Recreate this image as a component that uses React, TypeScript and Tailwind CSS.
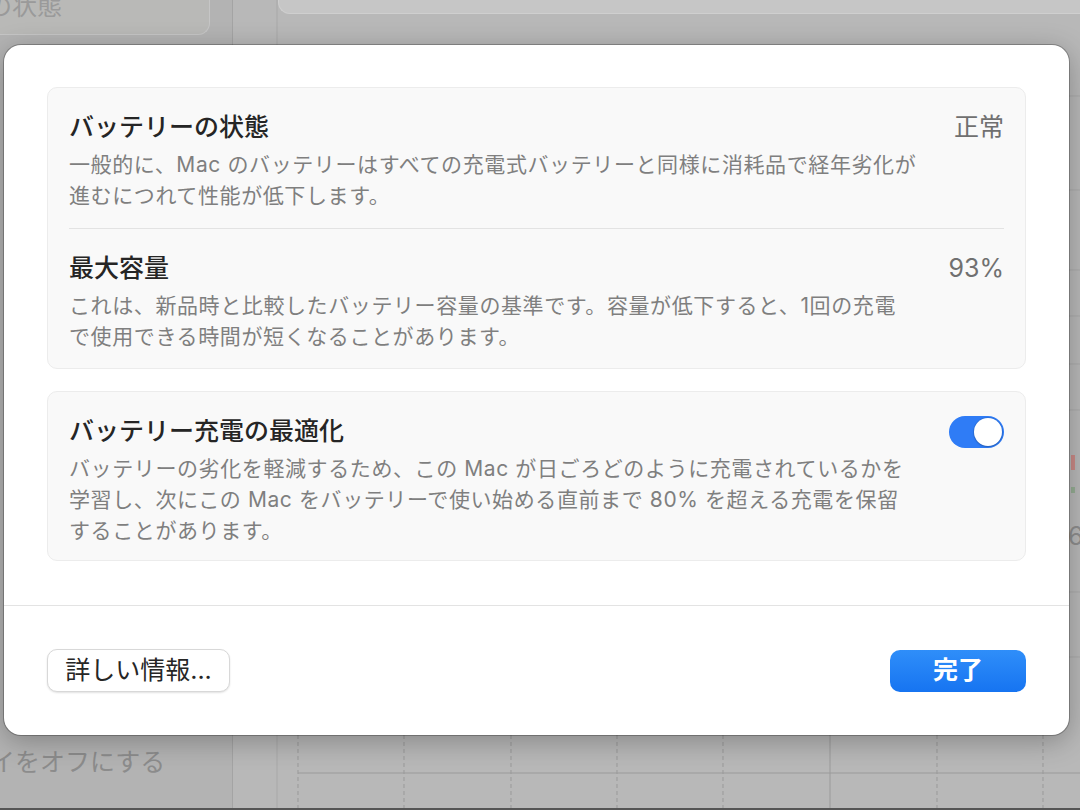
import React from "react";

function Row({
  title,
  value,
  lines,
  pt,
  pb,
}: {
  title: string;
  value: string;
  lines: string[];
  pt: string;
  pb: string;
}) {
  return (
    <div className={`flex items-start justify-between px-[21px] ${pt} ${pb}`}>
      <div className="flex flex-col">
        <div className="text-[25px] leading-[36px] font-medium text-[#252525]">{title}</div>
        <div className="mt-[4px] text-[21px] leading-[31px] tracking-[0.6px] text-[#7f7f7f]">
          {lines.map((l) => (
            <div key={l} className="whitespace-nowrap">
              {l}
            </div>
          ))}
        </div>
      </div>
      <div className="text-[25px] leading-[36px] text-[#707070]">{value}</div>
    </div>
  );
}

export default function App() {
  const dashedX = [65, 171, 278, 384, 490, 704, 810];
  const rightY = [96, 190, 270, 316, 364, 410, 592, 657];
  return (
    <div className="relative h-[810px] w-[1080px] overflow-hidden bg-[#b6b6b6] font-['Inter','Noto_Sans_CJK_JP',sans-serif]">
      {/* dimmed window behind the sheet */}
      <div className="flex h-full border-b-2 border-[#555555]">
        <div className="flex w-[233px] flex-col justify-between border-r border-[#a4a4a4] bg-[#b3b3b3]">
          <div className="h-[35px] w-[210px] overflow-hidden rounded-br-[12px] border-b border-r border-[#c6c6c6] bg-[#b9b9b7]">
            <div className="-ml-[13px] -mt-[10px] whitespace-nowrap text-[25px] leading-[32px] text-[#9a9a9a]">
              の状態
            </div>
          </div>
          <div className="-ml-[10px] mb-[30px] whitespace-nowrap text-[25px] leading-[32px] text-[#8c8c8c]">
            イをオフにする
          </div>
        </div>
        <div className="relative flex-1 bg-[#b8b8b8]">
          <svg className="absolute inset-0" width="847" height="808">
            <line x1="44" y1="0" x2="44" y2="808" stroke="#a8a8a8" />
            {dashedX.map((x) => (
              <line key={x} x1={x} y1="560" x2={x} y2="808" stroke="#999999" strokeDasharray="4 3" />
            ))}
            <line x1="597" y1="560" x2="597" y2="808" stroke="#9a9a9a" />
            <line x1="65" y1="773" x2="847" y2="773" stroke="#9a9a9a" />
            {rightY.map((y) => (
              <line key={y} x1="830" y1={y} x2="847" y2={y} stroke="#a9a9a9" />
            ))}
            <rect x="838" y="455" width="4" height="15" fill="#c98a86" />
            <rect x="838" y="487" width="4" height="6" fill="#95ad93" />
            <text x="835" y="545" fontSize="25" fill="#8e8e8e" fontFamily="Inter, sans-serif">
              6
            </text>
          </svg>
          <div className="relative ml-[45px] h-[14px] rounded-bl-[12px] border-b border-l border-[#cfcfcf] bg-[#c6c6c6]" />
        </div>
      </div>

      {/* sheet */}
      <div className="absolute left-[4px] top-[45px] flex h-[690px] w-[1065px] flex-col rounded-[17px] bg-white shadow-[0_0_0_1px_rgba(0,0,0,0.25),0_6px_28px_rgba(0,0,0,0.28)]">
        <div className="flex flex-1 flex-col gap-[22px] px-[43px] pt-[42px]">
          <div className="rounded-[10px] border border-[#ececec] bg-[#f9f9f9]">
            <Row
              title="バッテリーの状態"
              value="正常"
              pt="pt-[21px]"
              pb="pb-[17px]"
              lines={[
                "一般的に、Mac のバッテリーはすべての充電式バッテリーと同様に消耗品で経年劣化が",
                "進むにつれて性能が低下します。",
              ]}
            />
            <div className="mx-[21px] h-px bg-[#e3e3e3]" />
            <Row
              title="最大容量"
              value="93%"
              pt="pt-[21px]"
              pb="pb-[16px]"
              lines={[
                "これは、新品時と比較したバッテリー容量の基準です。容量が低下すると、1回の充電",
                "で使用できる時間が短くなることがあります。",
              ]}
            />
          </div>

          <div className="flex items-start justify-between rounded-[10px] border border-[#ececec] bg-[#f9f9f9] px-[21px] pb-[14px] pt-[21px]">
            <div className="flex flex-col">
              <div className="text-[25px] leading-[36px] font-medium text-[#252525]">
                バッテリー充電の最適化
              </div>
              <div className="mt-[4px] text-[21px] leading-[31px] tracking-[0.6px] text-[#7f7f7f]">
                <div className="whitespace-nowrap">
                  バッテリーの劣化を軽減するため、この Mac が日ごろどのように充電されているかを
                </div>
                <div className="whitespace-nowrap">
                  学習し、次にこの Mac をバッテリーで使い始める直前まで 80% を超える充電を保留
                </div>
                <div className="whitespace-nowrap">することがあります。</div>
              </div>
            </div>
            <div className="mt-[3px] flex h-[32px] w-[55px] items-center justify-end rounded-full bg-[#2f7cf6] p-[2px]">
              <div className="h-[28px] w-[28px] rounded-full bg-white shadow-[0_0_0_1px_rgba(0,0,0,0.08),0_1px_2px_rgba(0,0,0,0.2)]" />
            </div>
          </div>
        </div>

        <div className="flex h-[130px] items-center justify-between border-t border-[#e3e3e3] px-[43px]">
          <button className="flex h-[43px] w-[183px] items-center justify-center rounded-[10px] border border-[#d8d8d8] bg-white text-[25px] leading-none text-[#262626] shadow-[0_1px_2px_rgba(0,0,0,0.12)]">
            詳しい情報...
          </button>
          <button className="flex h-[42px] w-[136px] items-center justify-center rounded-[10px] bg-gradient-to-b from-[#2f8ef9] to-[#1674f1] text-[25px] font-semibold leading-none text-white">
            完了
          </button>
        </div>
      </div>
    </div>
  );
}
